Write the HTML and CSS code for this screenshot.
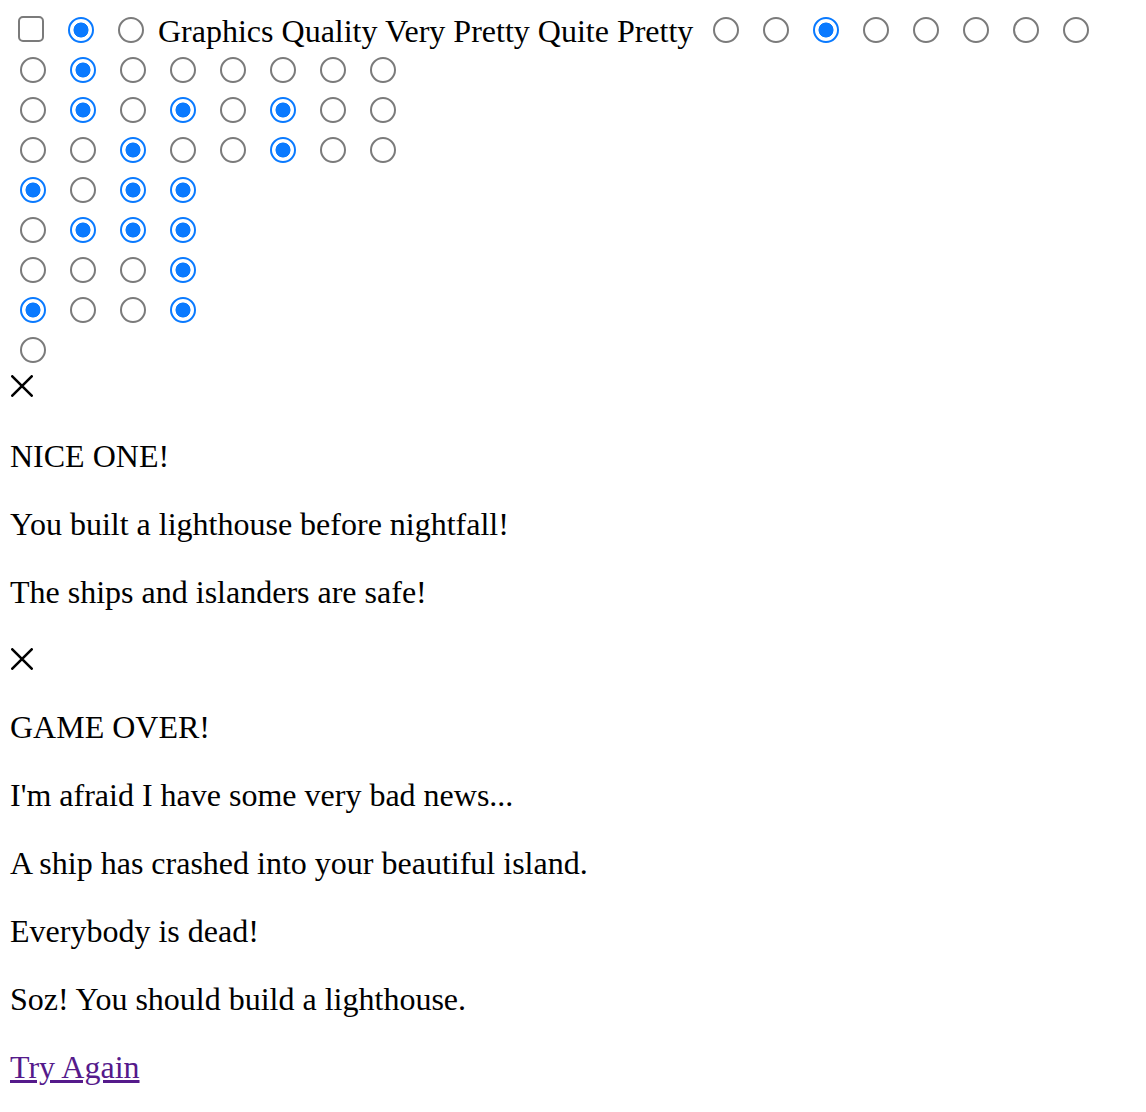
FILE: index.html
```html
<!DOCTYPE html>
<html>
<head>
<meta charset="utf-8">
<title>Lighthouse</title>
<link rel="stylesheet" href="styles.css">
</head>
<body>
<div class="controls">
  <div class="row row-first">
    <input type="checkbox" class="check">
    <input type="radio" class="radio" checked>
    <input type="radio" class="radio">
    <span class="label">Graphics Quality Very Pretty Quite Pretty</span>
    <input type="radio" class="radio">
    <input type="radio" class="radio">
    <input type="radio" class="radio" checked>
    <input type="radio" class="radio">
    <input type="radio" class="radio">
    <input type="radio" class="radio">
    <input type="radio" class="radio">
    <input type="radio" class="radio">
  </div>
  <div class="row">
    <input type="radio" class="radio">
    <input type="radio" class="radio" checked>
    <input type="radio" class="radio">
    <input type="radio" class="radio">
    <input type="radio" class="radio">
    <input type="radio" class="radio">
    <input type="radio" class="radio">
    <input type="radio" class="radio">
  </div>
  <div class="row">
    <input type="radio" class="radio">
    <input type="radio" class="radio" checked>
    <input type="radio" class="radio">
    <input type="radio" class="radio" checked>
    <input type="radio" class="radio">
    <input type="radio" class="radio" checked>
    <input type="radio" class="radio">
    <input type="radio" class="radio">
  </div>
  <div class="row">
    <input type="radio" class="radio">
    <input type="radio" class="radio">
    <input type="radio" class="radio" checked>
    <input type="radio" class="radio">
    <input type="radio" class="radio">
    <input type="radio" class="radio" checked>
    <input type="radio" class="radio">
    <input type="radio" class="radio">
  </div>
  <div class="row">
    <input type="radio" class="radio" checked>
    <input type="radio" class="radio">
    <input type="radio" class="radio" checked>
    <input type="radio" class="radio" checked>
  </div>
  <div class="row">
    <input type="radio" class="radio">
    <input type="radio" class="radio" checked>
    <input type="radio" class="radio" checked>
    <input type="radio" class="radio" checked>
  </div>
  <div class="row">
    <input type="radio" class="radio">
    <input type="radio" class="radio">
    <input type="radio" class="radio">
    <input type="radio" class="radio" checked>
  </div>
  <div class="row">
    <input type="radio" class="radio" checked>
    <input type="radio" class="radio">
    <input type="radio" class="radio">
    <input type="radio" class="radio" checked>
  </div>
  <div class="row">
    <input type="radio" class="radio">
  </div>
</div>

<div class="dialog">
  <div class="close">
    <svg class="close-icon" width="22" height="22" viewBox="0 0 22 22" aria-hidden="true">
      <path d="M1.3 1.3 L20.7 20.7 M20.7 1.3 L1.3 20.7" stroke="#000" stroke-width="2.6" stroke-linecap="round" fill="none"/>
    </svg>
  </div>
  <p class="msg">NICE ONE!</p>
  <p class="msg">You built a lighthouse before nightfall!</p>
  <p class="msg">The ships and islanders are safe!</p>
</div>

<div class="dialog">
  <div class="close">
    <svg class="close-icon" width="22" height="22" viewBox="0 0 22 22" aria-hidden="true">
      <path d="M1.3 1.3 L20.7 20.7 M20.7 1.3 L1.3 20.7" stroke="#000" stroke-width="2.6" stroke-linecap="round" fill="none"/>
    </svg>
  </div>
  <p class="msg">GAME OVER!</p>
  <p class="msg">I'm afraid I have some very bad news...</p>
  <p class="msg">A ship has crashed into your beautiful island.</p>
  <p class="msg">Everybody is dead!</p>
  <p class="msg">Soz! You should build a lighthouse.</p>
  <p class="msg"><a class="retry" href="#">Try Again</a></p>
</div>
</body>
</html>
```

FILE: styles.css
```css
html, body {
  background: #fff;
}

body {
  margin: 8px;
  font-family: "Liberation Serif", "Times New Roman", serif;
  font-size: 32px;
  color: #000;
}

.controls {
  display: flex;
  flex-direction: column;
  padding-bottom: 1px;
}

.row {
  display: flex;
  align-items: flex-start;
  gap: 24px;
  height: 40px;
  padding-left: 12px;
}

.row-first {
  padding-left: 10px;
}

.radio,
.check {
  -webkit-appearance: none;
  appearance: none;
  box-sizing: border-box;
  width: 26px;
  height: 26px;
  margin: 9px 0 0 0;
  flex: none;
  background: #fff;
}

.radio {
  border: 2px solid #7b7b7b;
  border-radius: 50%;
}

.radio:checked {
  border-color: #0a7aff;
  background: radial-gradient(circle at center, #0a7aff 0 7.2px, #fff 7.8px);
}

.check {
  margin-top: 8px;
  border: 2px solid #7b7b7b;
  border-radius: 5px;
}

.label {
  margin: 5px -4px 0 -10px;
  line-height: 36.8px;
  white-space: nowrap;
}

.close {
  height: 37px;
  padding-left: 3px;
  box-sizing: border-box;
  padding-top: 6px;
}

.dialog + .dialog .close {
  height: 35px;
}

.close-icon {
  display: block;
}

.msg {
  margin: 32px 0;
  padding-left: 2px;
  line-height: 36px;
}

.retry {
  color: #551a8b;
}
```
